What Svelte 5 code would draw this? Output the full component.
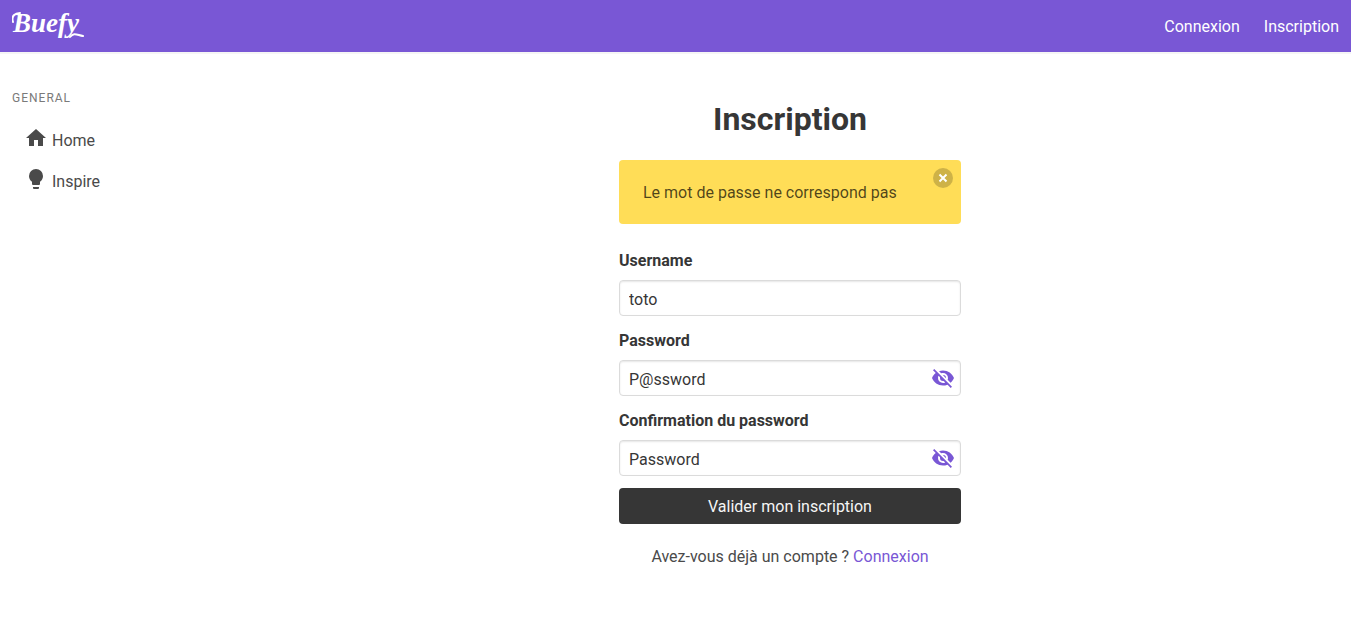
<script>
  let username = $state('toto');
  let password = $state('P@ssword');
  let confirmation = $state('Password');
  let showPassword = $state(true);
  let showConfirmation = $state(true);
  let warning = $state('Le mot de passe ne correspond pas');

  const hidden =
    'M11.83,9L15,12.16C15,12.11 15,12.05 15,12A3,3 0 0,0 12,9C11.94,9 11.89,9 11.83,9M7.53,9.8L9.08,11.35C9.03,11.56 9,11.77 9,12A3,3 0 0,0 12,15C12.22,15 12.44,14.97 12.65,14.92L14.2,16.47C13.53,16.8 12.79,17 12,17A5,5 0 0,1 7,12C7,11.21 7.2,10.47 7.53,9.8M2,4.27L4.28,6.55L4.73,7C3.08,8.3 1.78,10 1,12C2.73,16.39 7,19.5 12,19.5C13.55,19.5 15.03,19.2 16.38,18.66L16.81,19.08L19.73,22L21,20.73L3.27,3M12,7A5,5 0 0,1 17,12C17,12.64 16.87,13.26 16.64,13.82L19.57,16.75C21.07,15.5 22.27,13.86 23,12C21.27,7.61 17,4.5 12,4.5C10.6,4.5 9.26,4.75 8,5.2L10.17,7.35C10.74,7.13 11.35,7 12,7Z';
  const shown =
    'M12,9A3,3 0 0,0 9,12A3,3 0 0,0 12,15A3,3 0 0,0 15,12A3,3 0 0,0 12,9M12,17A5,5 0 0,1 7,12A5,5 0 0,1 12,7A5,5 0 0,1 17,12A5,5 0 0,1 12,17M12,4.5C7,4.5 2.73,7.61 1,12C2.73,16.39 7,19.5 12,19.5C17,19.5 21.27,16.39 23,12C21.27,7.61 17,4.5 12,4.5Z';

  const items = [
    { label: 'Home', icon: 'M10,20V14H14V20H19V12H22L12,3L2,12H5V20H10Z' },
    {
      label: 'Inspire',
      icon: 'M12,2A7,7 0 0,0 5,9C5,11.38 6.19,13.47 8,14.74V17A1,1 0 0,0 9,18H15A1,1 0 0,0 16,17V14.74C17.81,13.47 19,11.38 19,9A7,7 0 0,0 12,2M9,21A1,1 0 0,0 10,22H14A1,1 0 0,0 15,21V20H9V21Z'
    }
  ];
</script>

<header class="navbar">
  <a class="brand" href="#home" aria-label="Buefy">
    <svg width="80" height="40" viewBox="0 0 80 40">
      <text x="1" y="26" class="wordmark">Buefy</text>
      <path d="M1 16C-1 10 3 7 8 7" class="swash" />
      <path d="M58 31C62 26 65 29 71 30" class="swash" />
    </svg>
  </a>
  <nav class="links">
    <a href="#connexion">Connexion</a>
    <a href="#inscription">Inscription</a>
  </nav>
</header>

<div class="layout">
  <aside>
    <p class="menu-label">General</p>
    <ul>
      {#each items as item}
        <li>
          <a href="#{item.label}">
            <svg class="icon" viewBox="0 0 24 24"><path d={item.icon} /></svg>
            <span>{item.label}</span>
          </a>
        </li>
      {/each}
    </ul>
  </aside>

  <main>
    <section class="panel">
      <h1>Inscription</h1>
      {#if warning}
        <div class="notification" role="alert">
          {warning}
          <button type="button" class="delete" aria-label="Fermer" onclick={() => (warning = '')}>
            <svg viewBox="0 0 20 20"><path d="M6.5 6.5L13.5 13.5M13.5 6.5L6.5 13.5" /></svg>
          </button>
        </div>
      {/if}
      <form onsubmit={(e) => e.preventDefault()}>
        <div class="field">
          <label for="username">Username</label>
          <div class="control">
            <input id="username" type="text" bind:value={username} />
          </div>
        </div>
        <div class="field">
          <label for="password">Password</label>
          <div class="control">
            <input id="password" class="revealable" type={showPassword ? 'text' : 'password'} bind:value={password} />
            <button type="button" class="reveal" aria-label="Afficher le mot de passe" onclick={() => (showPassword = !showPassword)}>
              <svg class="icon" viewBox="0 0 24 24"><path d={showPassword ? hidden : shown} /></svg>
            </button>
          </div>
        </div>
        <div class="field">
          <label for="confirmation">Confirmation du password</label>
          <div class="control">
            <input id="confirmation" class="revealable" type={showConfirmation ? 'text' : 'password'} bind:value={confirmation} />
            <button type="button" class="reveal" aria-label="Afficher la confirmation" onclick={() => (showConfirmation = !showConfirmation)}>
              <svg class="icon" viewBox="0 0 24 24"><path d={showConfirmation ? hidden : shown} /></svg>
            </button>
          </div>
        </div>
        <button class="submit" type="submit">Valider mon inscription</button>
      </form>
      <p class="login">Avez-vous déjà un compte ? <a href="#connexion">Connexion</a></p>
    </section>
  </main>
</div>

<style>
  :global(body) {
    background: #fff;
    color: #4a4a4a;
    font: 16px/26px Roboto, sans-serif;
  }
  :global(*) {
    box-sizing: border-box;
  }
  a {
    color: #7957d5;
    text-decoration: none;
  }
  .navbar {
    display: flex;
    justify-content: space-between;
    align-items: center;
    min-height: 52px;
    padding: 0 12px;
    background: #7957d5;
    box-shadow: 0 2px 0 #f5f5f5;
  }
  .brand {
    display: flex;
  }
  .wordmark {
    fill: #fff;
    font: italic bold 27px 'Liberation Serif', serif;
  }
  .swash {
    fill: none;
    stroke: #fff;
    stroke-width: 2;
    stroke-linecap: round;
  }
  .links {
    display: flex;
    gap: 24px;
    padding-top: 2px;
  }
  .links a {
    color: #fff;
  }
  .layout {
    display: flex;
  }
  aside {
    flex: 0 0 229px;
    padding: 36px 12px;
  }
  .menu-label {
    margin: 0 0 14px;
    color: #7a7a7a;
    font-size: 12px;
    line-height: 20px;
    letter-spacing: 1px;
    text-transform: uppercase;
  }
  ul {
    margin: 0;
    padding: 0;
    list-style: none;
  }
  li a {
    display: flex;
    align-items: flex-start;
    gap: 4px;
    padding: 4px 12px 9px;
    color: #4a4a4a;
  }
  li span {
    padding-top: 2px;
  }
  .icon {
    flex: none;
    width: 24px;
    height: 24px;
    fill: currentColor;
  }
  main {
    flex: 1;
    min-width: 0;
    padding: 48px 12px;
  }
  .panel {
    width: 33.3333%;
    min-width: 320px;
    margin: 0 auto;
    padding: 0 12px;
  }
  h1 {
    margin: 0 0 22px;
    color: #363636;
    font-size: 32px;
    font-weight: 700;
    line-height: 38px;
    text-align: center;
  }
  .notification {
    position: relative;
    margin-bottom: 24px;
    padding: 20px 40px 18px 24px;
    border-radius: 4px;
    background: #ffdd57;
    color: rgba(0, 0, 0, 0.7);
  }
  .delete {
    position: absolute;
    top: 8px;
    right: 8px;
    width: 20px;
    height: 20px;
    padding: 0;
    border: 0;
    border-radius: 50%;
    background: rgba(10, 10, 10, 0.2);
    cursor: pointer;
  }
  .delete svg {
    display: block;
    stroke: #fff;
    stroke-width: 2;
  }
  .field {
    margin-bottom: 12px;
  }
  label {
    display: block;
    margin-bottom: 6px;
    color: #363636;
    font-weight: 700;
  }
  .control {
    position: relative;
  }
  input {
    display: block;
    width: 100%;
    height: 36px;
    padding: 6px 9px 4px;
    border: 1px solid #dbdbdb;
    border-radius: 4px;
    background: #fff;
    box-shadow: inset 0 1px 2px rgba(10, 10, 10, 0.1);
    color: #363636;
    font: inherit;
  }
  .revealable {
    padding-right: 36px;
  }
  .reveal {
    position: absolute;
    top: 0;
    right: 0;
    display: flex;
    align-items: center;
    justify-content: center;
    width: 36px;
    height: 36px;
    padding: 0;
    border: 0;
    background: none;
    color: #7957d5;
    cursor: pointer;
  }
  .submit {
    display: block;
    width: 100%;
    height: 36px;
    padding: 6px 16px 4px;
    border: 0;
    border-radius: 4px;
    background: #363636;
    color: #f5f5f5;
    font: inherit;
    cursor: pointer;
  }
  .login {
    margin: 20px 0 0;
    text-align: center;
  }
</style>
